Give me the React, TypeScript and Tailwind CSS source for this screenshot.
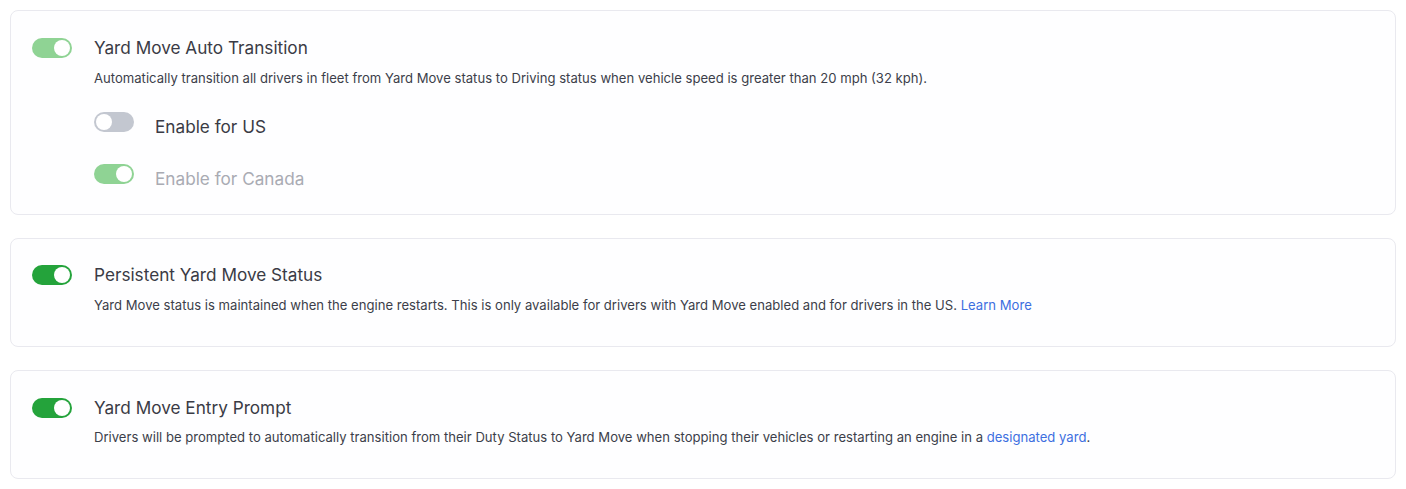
import React from "react";

function Toggle({ on, tone, lift }: { on: boolean; tone: "light" | "dark" | "off"; lift?: boolean }) {
  const bg =
    tone === "dark" ? "bg-[#24a33b]" : tone === "light" ? "bg-[#8fd394]" : "bg-[#c3c7d0]";
  return (
    <div className={`relative h-[20px] w-[40px] shrink-0 rounded-full ${bg} ${lift ? "mb-[10px]" : ""}`}>
      <div
        className={`absolute top-[2px] h-[16px] w-[16px] rounded-full bg-white ${on ? "left-[22px]" : "left-[2px]"}`}
      />
    </div>
  );
}

export default function App() {
  return (
    <div
      className="flex flex-col gap-[23px] bg-white px-[10px] pt-[10px] pb-[10px] text-[#3b3c47]"
      style={{ fontFamily: "Inter, 'Open Sans', sans-serif" }}
    >
      <div className="rounded-[8px] border border-[#e9e9ef] bg-[#fefeff] pl-[21px] pr-[21px] pt-[25px] pb-[20px]">
        <div className="flex items-center gap-[22px]">
          <Toggle on tone="light" />
          <div className="text-[17.2px] leading-[24px] text-[#3a3b45]">Yard Move Auto Transition</div>
        </div>
        <div className="pl-[62px] pt-[9px] text-[13.1px] leading-[18px] text-[#3c3e4a]">
          Automatically transition all drivers in fleet from Yard Move status to Driving status when vehicle speed is greater than 20 mph (32 kph).
        </div>
        <div className="flex flex-col gap-[22px] pl-[62px] pt-[25px]">
          <div className="flex items-center gap-[21px]">
            <Toggle on={false} tone="off" lift />
            <div className="text-[17.2px] leading-[24px] text-[#3a3b45]">Enable for US</div>
          </div>
          <div className="flex items-center gap-[21px]">
            <Toggle on tone="light" lift />
            <div className="text-[17.2px] leading-[24px] text-[#a9abb3]">Enable for Canada</div>
          </div>
        </div>
      </div>

      <div className="rounded-[8px] border border-[#e9e9ef] bg-[#fefeff] pl-[21px] pr-[21px] pt-[24px] pb-[32px]">
        <div className="flex items-center gap-[22px]">
          <Toggle on tone="dark" />
          <div className="text-[17.2px] leading-[24px] text-[#3a3b45]">Persistent Yard Move Status</div>
        </div>
        <div className="pl-[62px] pt-[9px] text-[13.1px] leading-[18px] text-[#3c3e4a]">
          Yard Move status is maintained when the engine restarts. This is only available for drivers with Yard Move enabled and for drivers in the US.{" "}
          <span className="text-[#3d6fdf]">Learn More</span>
        </div>
      </div>

      <div className="rounded-[8px] border border-[#e9e9ef] bg-[#fefeff] pl-[21px] pr-[21px] pt-[25px] pb-[32px]">
        <div className="flex items-center gap-[22px]">
          <Toggle on tone="dark" />
          <div className="text-[17.2px] leading-[24px] text-[#3a3b45]">Yard Move Entry Prompt</div>
        </div>
        <div className="pl-[62px] pt-[8px] text-[13.1px] leading-[18px] text-[#3c3e4a]">
          Drivers will be prompted to automatically transition from their Duty Status to Yard Move when stopping their vehicles or restarting an engine in a{" "}
          <span className="text-[#3d6fdf]">designated yard</span>.
        </div>
      </div>
    </div>
  );
}
